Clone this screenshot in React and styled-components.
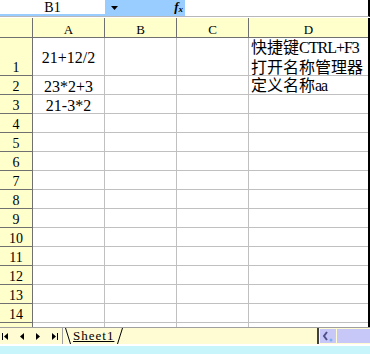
import styled, { createGlobalStyle } from "styled-components";

const GlobalStyle = createGlobalStyle`
  html, body {
    margin: 0;
    padding: 0;
    background: #ffffff;
  }
  body {
    font-family: "Liberation Serif", "Noto Sans CJK SC", serif;
    color: #000;
  }
`;

const HEADER_BG = "#ffffcc";
const HEADER_LINE = "#707070";
const GRID_LINE = "#c0c0c0";

const columns = ["A", "B", "C", "D"];

// 14 visible rows; the 15th is cut by the tab bar, as in the sheet window
const rows = [
  { a: "21+12/2", d: ["快捷键CTRL+F3", "打开名称管理器"] },
  { a: "23*2+3", d: ["定义名称aa"] },
  { a: "21-3*2" },
  {},
  {},
  {},
  {},
  {},
  {},
  {},
  {},
  {},
  {},
  {},
];

const Window = styled.div`
  width: 370px;
  height: 354px;
  display: flex;
  flex-direction: column;
  background: #fff;
  overflow: hidden;
`;

const FormulaBar = styled.div`
  display: flex;
  height: 17px;
  box-sizing: border-box;
  border-bottom: 1px solid #b8b8b8;
  border-right: 2px solid #000;
`;

const NameBox = styled.div`
  width: 105px;
  height: 16px;
  box-sizing: border-box;
  border-bottom: 2px solid #99ccff;
  padding-top: 1px;
  font-size: 14px;
  line-height: 14px;
  text-align: center;
`;

const NameDrop = styled.div`
  width: 80px;
  height: 16px;
  box-sizing: border-box;
  background: #99ccff;
  display: flex;
  align-items: center;
  justify-content: space-between;
  padding: 0 2px 0 6px;
`;

const Fx = styled.span`
  font-style: italic;
  font-weight: bold;
  font-size: 13px;
  line-height: 16px;

  sub {
    font-size: 9px;
    vertical-align: -1px;
  }
`;

const FormulaInput = styled.div`
  flex: 1;
  background: #fff;
`;

const Sheet = styled.div`
  flex: 1;
  min-height: 0;
  margin-top: 1px;
  overflow: hidden;
  display: grid;
  grid-template-columns: 33px 72px 72px 72px 1fr;
  grid-template-rows: 20px 38px;
  grid-auto-rows: 19px;
  border-right: 2px solid #000;
`;

const Corner = styled.div`
  background: ${HEADER_BG};
  border-right: 1px solid ${HEADER_LINE};
  border-bottom: 1px solid ${HEADER_LINE};
`;

const ColHead = styled.div`
  box-sizing: border-box;
  background: ${HEADER_BG};
  border-bottom: 1px solid ${HEADER_LINE};
  border-right: ${(p) => (p.$last ? "none" : `1px solid ${HEADER_LINE}`)};
  padding-top: 2px;
  font-size: 13px;
  line-height: 19px;
  text-align: center;
`;

const RowHead = styled.div`
  box-sizing: border-box;
  background: ${HEADER_BG};
  border-right: 1px solid ${HEADER_LINE};
  border-bottom: ${(p) => (p.$open ? "none" : `1px solid ${HEADER_LINE}`)};
  padding-bottom: 1px;
  display: flex;
  align-items: flex-end;
  justify-content: center;
  font-size: 14px;
  line-height: 13px;
`;

const Cell = styled.div`
  min-width: 0;
  box-sizing: border-box;
  border-right: ${(p) => (p.$last ? "none" : `1px solid ${GRID_LINE}`)};
  border-bottom: ${(p) => (p.$open ? "none" : `1px solid ${GRID_LINE}`)};
  display: flex;
  flex-direction: column;
  justify-content: center;
  align-items: ${(p) => (p.$center ? "center" : "flex-start")};
  padding: ${(p) => (p.$center ? "3px 0 0" : "0 0 2px 2px")};
  font-size: 16px;
  white-space: nowrap;
`;

const Value = styled.div`
  line-height: 18px;
`;

const Line = styled.div`
  flex: none;
  height: 20px;
  font-family: "Noto Sans CJK SC", sans-serif;
  line-height: 20px;
`;

const Latin = styled.span`
  font-family: "Liberation Serif", serif;
  line-height: 1;
  letter-spacing: -1px;
`;

const TabBar = styled.div`
  height: 17px;
  box-sizing: border-box;
  border-top: 1px solid #a0a0a0;
  background: #fffcd4;
  display: flex;
  align-items: stretch;
`;

const NavGroup = styled.div`
  width: 63px;
  box-sizing: border-box;
  border-right: 1px solid #a0a0a0;
  display: flex;
  align-items: center;
  gap: 12px;
  padding-left: 2px;
`;

const NavButton = styled.button`
  border: 0;
  padding: 0;
  background: transparent;
  display: flex;
  align-items: center;
`;

const Tab = styled.div`
  display: flex;
  align-items: stretch;
`;

const TabLabel = styled.span`
  font-size: 13px;
  line-height: 16px;
  letter-spacing: 1px;
  text-decoration: underline;
  padding: 0 2px;
`;

const Spacer = styled.div`
  flex: 1;
`;

const Splitter = styled.div`
  width: 2px;
  background: #404040;
  margin-right: 1px;
`;

const ScrollButton = styled.button`
  width: 16px;
  margin: 1px 1px 1px 0;
  padding: 0;
  border: 0;
  background: #c8c8f8;
  display: flex;
  align-items: center;
  justify-content: center;
`;

const ScrollTrack = styled.div`
  flex: 0 0 33px;
  margin: 1px 0;
  background: #c8c8f8;
`;

const StatusStrip = styled.div`
  height: 10px;
  box-sizing: border-box;
  border-top: 2px solid #fff;
  background: #c8f4fc;
`;

const isHan = (s) => /[\u4e00-\u9fff]/.test(s);

const MixedText = ({ text }) =>
  text
    .match(/[\u4e00-\u9fff]+|[^\u4e00-\u9fff]+/g)
    .map((run, i) => (isHan(run) ? <span key={i}>{run}</span> : <Latin key={i}>{run}</Latin>));

const FirstIcon = () => (
  <svg width="6" height="7" viewBox="0 0 6 7">
    <rect x="0" y="0" width="1" height="7" fill="#000" />
    <path d="M6 0V7L2 3.5Z" fill="#000" />
  </svg>
);

const PrevIcon = () => (
  <svg width="4" height="7" viewBox="0 0 4 7">
    <path d="M4 0V7L0 3.5Z" fill="#000" />
  </svg>
);

const NextIcon = () => (
  <svg width="4" height="7" viewBox="0 0 4 7">
    <path d="M0 0V7L4 3.5Z" fill="#000" />
  </svg>
);

const LastIcon = () => (
  <svg width="6" height="7" viewBox="0 0 6 7">
    <path d="M0 0V7L4 3.5Z" fill="#000" />
    <rect x="5" y="0" width="1" height="7" fill="#000" />
  </svg>
);

const TabEdge = ({ side }) =>
  side === "left" ? (
    <svg width="8" height="16" viewBox="0 0 8 16">
      <line x1="1.5" y1="0" x2="6.5" y2="16" stroke="#fff" />
      <line x1="2.5" y1="0" x2="7.5" y2="16" stroke="#000" />
    </svg>
  ) : (
    <svg width="8" height="16" viewBox="0 0 8 16">
      <line x1="6.5" y1="0" x2="1.5" y2="16" stroke="#000" />
    </svg>
  );

const App = () => {
  return (
    <Window>
      <GlobalStyle />
      <FormulaBar>
        <NameBox>B1</NameBox>
        <NameDrop>
          <svg width="7" height="4" viewBox="0 0 7 4">
            <path d="M0 0H7L3.5 4Z" fill="#000" />
          </svg>
          <Fx>
            f<sub>x</sub>
          </Fx>
        </NameDrop>
        <FormulaInput />
      </FormulaBar>

      <Sheet>
        <Corner />
        {columns.map((col, i) => (
          <ColHead key={col} $last={i === columns.length - 1}>
            {col}
          </ColHead>
        ))}
        {rows.map((row, r) => [
          <RowHead key={`h${r}`}>{r + 1}</RowHead>,
          <Cell key={`a${r}`} $center>
            {row.a && <Value>{row.a}</Value>}
          </Cell>,
          <Cell key={`b${r}`} />,
          <Cell key={`c${r}`} />,
          <Cell key={`d${r}`} $last>
            {(row.d || []).map((t) => (
              <Line key={t}>
                <MixedText text={t} />
              </Line>
            ))}
          </Cell>,
        ])}
        <RowHead $open />
        <Cell $open />
        <Cell $open />
        <Cell $open />
        <Cell $open $last />
      </Sheet>

      <TabBar>
        <NavGroup>
          <NavButton type="button">
            <FirstIcon />
          </NavButton>
          <NavButton type="button">
            <PrevIcon />
          </NavButton>
          <NavButton type="button">
            <NextIcon />
          </NavButton>
          <NavButton type="button">
            <LastIcon />
          </NavButton>
        </NavGroup>
        <Tab>
          <TabEdge side="left" />
          <TabLabel>Sheet1</TabLabel>
          <TabEdge side="right" />
        </Tab>
        <Spacer />
        <Splitter />
        <ScrollButton type="button">
          <svg width="16" height="14" viewBox="0 0 16 14">
            <polyline points="7,3 4,7 7,11" fill="none" stroke="#50508a" strokeWidth="2" />
            <circle cx="11" cy="11" r="1.5" fill="#7ab0f0" />
          </svg>
        </ScrollButton>
        <ScrollTrack />
      </TabBar>
      <StatusStrip />
    </Window>
  );
};

export default App;
